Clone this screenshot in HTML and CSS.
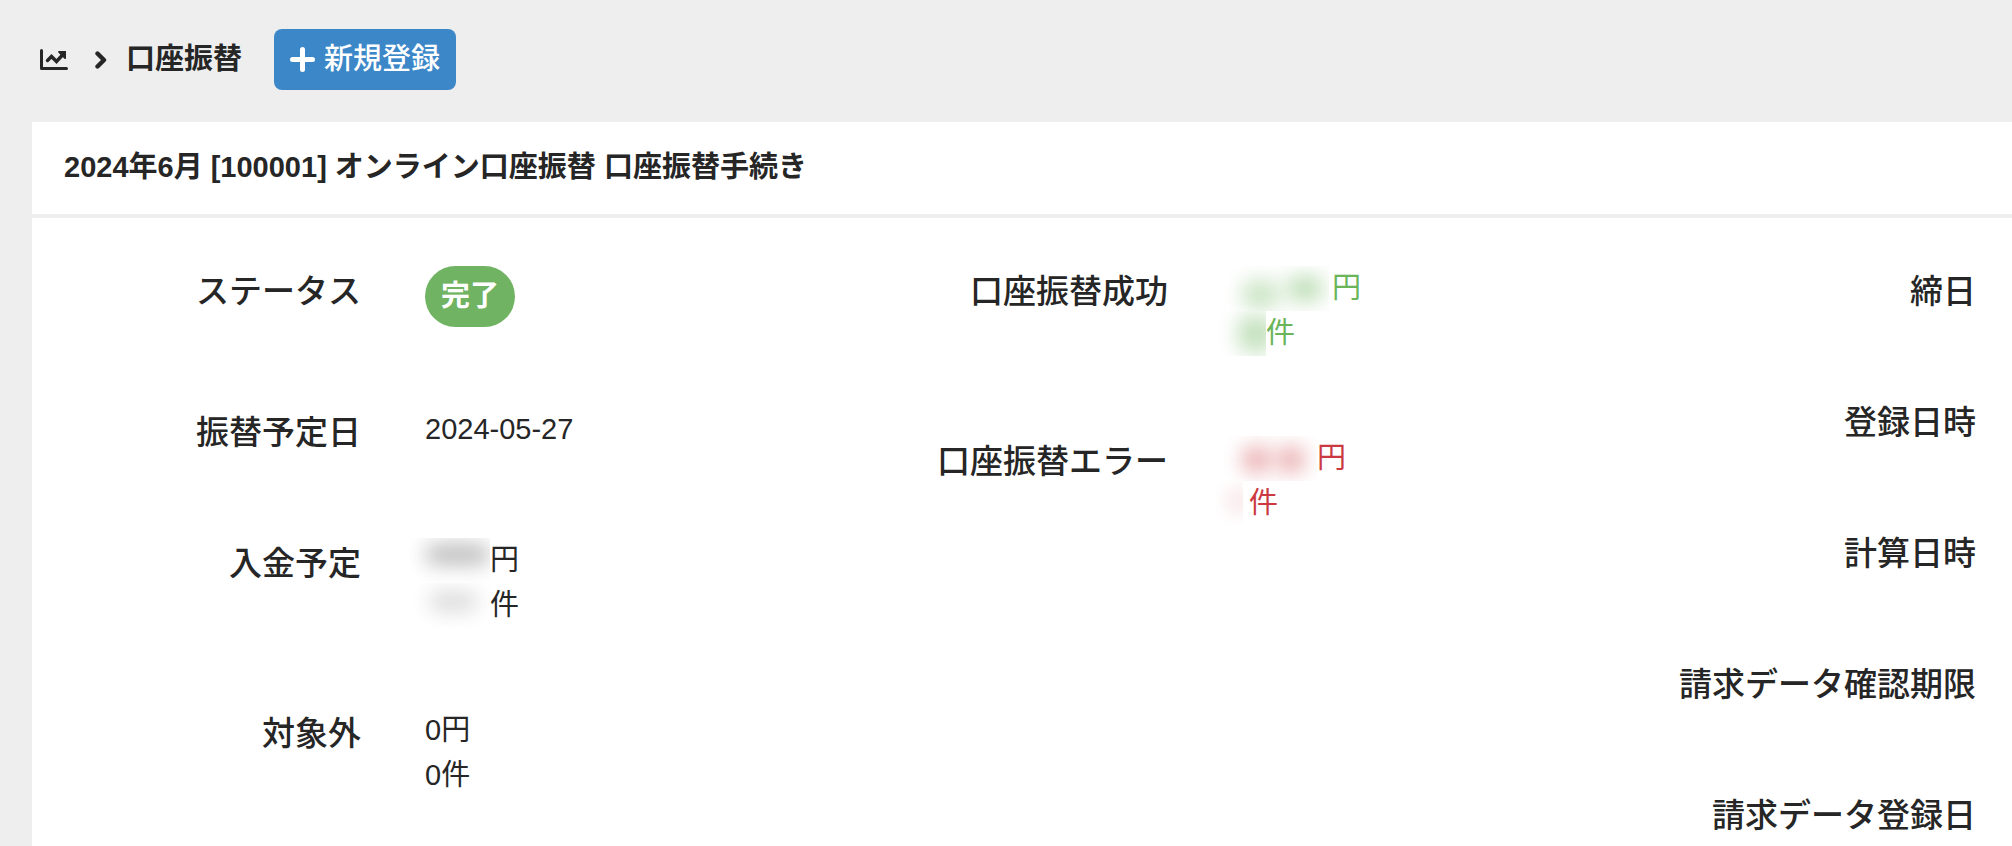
FILE: index.html
```
<!DOCTYPE html>
<html lang="ja">
<head>
    <meta charset="UTF-8">
    <meta name="viewport" content="width=device-width, initial-scale=1.0">
    <title>口座振替</title>
    <link rel="stylesheet" href="styles.css">
</head>
<body>
    <header class="page-header">
        <nav class="breadcrumb">
            <a href="#" class="home" aria-label="ホーム">
                <svg width="28" height="21" viewBox="0 0 28 21">
                    <path d="M1.5 1.5v18h25" fill="none" stroke="currentColor" stroke-width="3" stroke-linecap="round" stroke-linejoin="round"/>
                    <path d="M7.500 11.500l4-4 5 5 6-6.500" fill="none" stroke="currentColor" stroke-width="3.400" stroke-linecap="round"/>
                    <path d="M18.500 2h7.500v7.500q-.5 1-1.500.2l-6-6q-.8-1.200 0-1.700z" fill="currentColor"/>
                </svg>
            </a>
            <svg class="chevron" width="12" height="18" viewBox="0 0 12 18">
                <path d="M2.500 2.500L9 9l-6.500 6.500" fill="none" stroke="currentColor" stroke-width="4.400" stroke-linecap="round" stroke-linejoin="round"/>
            </svg>
            <h1>口座振替</h1>
        </nav>
        <button type="button" class="btn-new">
            <svg width="25" height="25" viewBox="0 0 25 25">
                <path d="M12.500 2.500v20M2.500 12.500h20" stroke="currentColor" stroke-width="5" stroke-linecap="round"/>
            </svg>
            新規登録
        </button>
    </header>

    <main class="panel">
        <h2>2024年6月 [100001] オンライン口座振替 口座振替手続き</h2>
        <div class="columns">
            <dl>
                <div class="item">
                    <dt>ステータス</dt>
                    <dd><span class="badge">完了</span></dd>
                </div>
                <div class="item">
                    <dt>振替予定日</dt>
                    <dd>2024-05-27</dd>
                </div>
                <div class="item">
                    <dt>入金予定</dt>
                    <dd>
                        <div class="line"><span class="mask mask-plan-yen"></span>円</div>
                        <div class="line"><span class="mask mask-plan-count"></span>件</div>
                    </dd>
                </div>
                <div class="item">
                    <dt>対象外</dt>
                    <dd>
                        <div class="line">0円</div>
                        <div class="line">0件</div>
                    </dd>
                </div>
            </dl>

            <dl>
                <div class="item">
                    <dt>口座振替成功</dt>
                    <dd class="success">
                        <div class="line"><span class="mask mask-ok-yen"></span>円</div>
                        <div class="line"><span class="mask mask-ok-count"></span>件</div>
                    </dd>
                </div>
                <div class="item">
                    <dt>口座振替エラー</dt>
                    <dd class="error">
                        <div class="line"><span class="mask mask-ng-yen"></span>円</div>
                        <div class="line"><span class="mask mask-ng-count"></span>件</div>
                    </dd>
                </div>
            </dl>

            <dl class="dates">
                <div class="item"><dt>締日</dt></div>
                <div class="item"><dt>登録日時</dt></div>
                <div class="item"><dt>計算日時</dt></div>
                <div class="item"><dt>請求データ確認期限</dt></div>
                <div class="item"><dt>請求データ登録日</dt></div>
            </dl>
        </div>
    </main>
</body>
</html>
```
FILE: styles.css
```
* {
    box-sizing: border-box;
}

body {
    display: flex;
    flex-direction: column;
    min-height: 100vh;
    margin: 0;
    background-color: #eeeeee;
    color: #262626;
    font-family: "Liberation Sans", "Noto Sans CJK JP", sans-serif;
    font-size: 29px;
    line-height: 45px;
}

h1,
h2,
dl,
dd {
    margin: 0;
    font-size: 29px;
}

.page-header {
    display: flex;
    align-items: center;
    gap: 32px;
    padding: 29px 40px 32px;
}

.breadcrumb {
    display: flex;
    align-items: center;
}

.home {
    display: flex;
    color: inherit;
}

.chevron {
    margin: 0 19px 0 27px;
}

.btn-new {
    display: flex;
    align-items: center;
    gap: 9px;
    padding: 8px 16px;
    border: 0;
    border-radius: 8px;
    background-color: #3c87c8;
    color: #ffffff;
    font: inherit;
    font-weight: 500;
}

.panel {
    flex: 1;
    margin-left: 32px;
    background-color: #ffffff;
}

h2 {
    padding: 23px 32px 24px;
    border-bottom: 4px solid #eeeeee;
}

.columns {
    display: grid;
    grid-template-columns: 807fr 807fr 366fr;
    padding-top: 48px;
}

.item {
    display: grid;
    grid-template-columns: 329fr 414fr;
    column-gap: 64px;
    margin-bottom: 80px;
}

.item:last-child {
    margin-bottom: 0;
}

.dates .item {
    grid-template-columns: 1fr;
    padding-right: 36px;
}

dt {
    font-size: 33px;
    font-weight: 500;
    line-height: 51px;
    text-align: right;
    white-space: nowrap;
}

.badge {
    display: block;
    width: fit-content;
    padding: 8px 16px;
    border-radius: 32px;
    background-color: #70b362;
    color: #ffffff;
    font-weight: bold;
}

.line {
    display: flex;
}

.success {
    color: #6ab45a;
}

.error {
    color: #cc3a41;
}

/* 金額・件数の目隠し */
.mask {
    display: flex;
    height: 45px;
    margin-left: -16px;
    overflow: hidden;
}

.mask::before,
.mask::after {
    content: "";
    flex: 1;
    border-radius: 12px;
    background-color: currentColor;
    filter: blur(10px);
    opacity: 0.3;
}

.mask::after {
    display: none;
}

.mask-plan-yen {
    width: 81px;
}

.mask-plan-yen::before {
    margin: 6px 0 18px 16px;
}

.mask-plan-count {
    width: 81px;
}

.mask-plan-count::before {
    margin: 8px 12px 16px 20px;
    opacity: 0.16;
}

.mask-ok-yen {
    width: 113px;
    margin-right: 3px;
}

.mask-ok-yen::before {
    margin: 14px 8px 2px 26px;
    opacity: 0.35;
}

.mask-ok-yen::after {
    display: block;
    margin: 10px 6px 10px 0;
    opacity: 0.45;
}

.mask-ok-count {
    width: 50px;
}

.mask-ok-count::before {
    margin: 4px -8px 4px 22px;
    opacity: 0.4;
}

.mask-ng-yen {
    width: 101px;
}

.mask-ng-yen::before {
    margin: 10px 3px 8px 26px;
    opacity: 0.4;
}

.mask-ng-yen::after {
    display: block;
    margin: 10px 12px 8px 3px;
    opacity: 0.4;
}

.mask-ng-count {
    width: 27px;
    margin-right: 6px;
}

.mask-ng-count::before {
    margin: 8px -4px 14px 14px;
    opacity: 0.2;
}
```
